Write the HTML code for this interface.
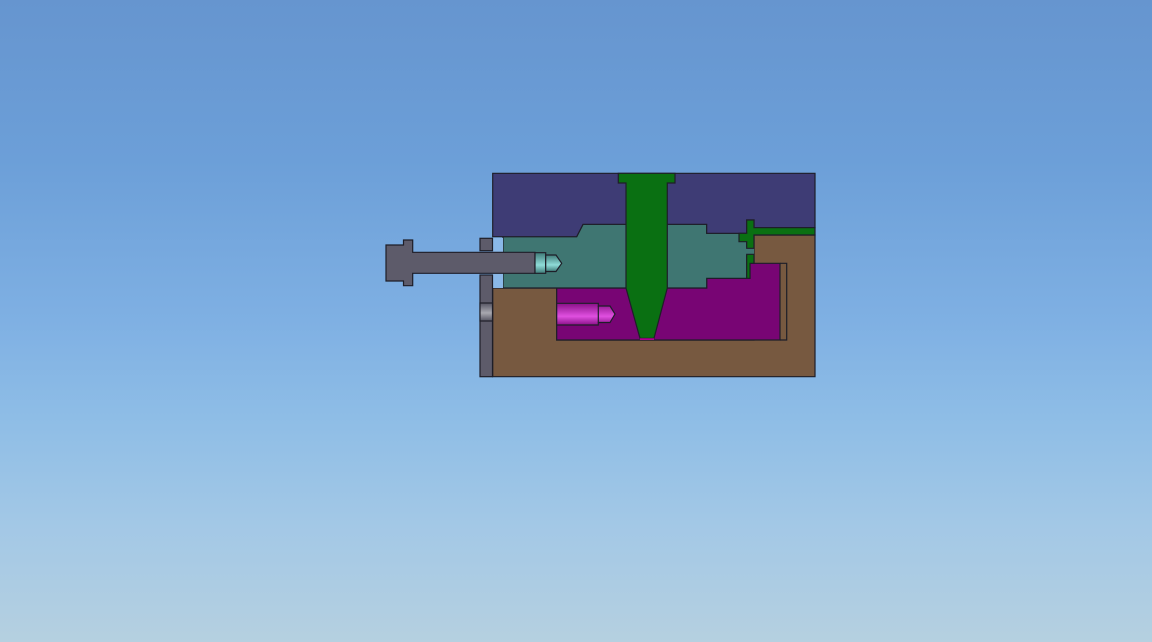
<!DOCTYPE html>
<html><head><meta charset="utf-8"><style>
html,body{margin:0;padding:0;width:1152px;height:642px;overflow:hidden}
body{background:linear-gradient(to bottom,#6695cf 0%,#6c9fd8 25%,#7fb0e3 50%,#8ebde6 65%,#a3c8e6 82%,#b5d0e0 100%)}
svg{position:absolute;left:0;top:0}
</style></head><body>
<svg width="1152" height="642" viewBox="0 0 1152 642" stroke="#1e1e28" stroke-width="1.2" stroke-linejoin="miter">
<defs>
<linearGradient id="tg" x1="0" y1="0" x2="0" y2="1"><stop offset="0" stop-color="#3f7b78"/><stop offset="0.6" stop-color="#8fdcd8"/><stop offset="1" stop-color="#3f7b78"/></linearGradient>
<linearGradient id="mg" x1="0" y1="0" x2="0" y2="1"><stop offset="0" stop-color="#8a1088"/><stop offset="0.6" stop-color="#e050e0"/><stop offset="1" stop-color="#8a1088"/></linearGradient>
<linearGradient id="gg" x1="0" y1="0" x2="0" y2="1"><stop offset="0" stop-color="#555462"/><stop offset="0.55" stop-color="#a8a8b0"/><stop offset="1" stop-color="#555462"/></linearGradient>
</defs>
<path d="M492.7 288 H556.7 V340 H754 V235 H815 V376.7 H492.7 Z" fill="#775940"/>
<path d="M556.7 288 H706.7 V278.3 H750 V263.3 H780 V340 H556.7 Z" fill="#780574"/>
<path d="M780 263.3 H786.7 V340 H780" fill="none"/>
<path d="M503 236.7 H576.7 L583 224.3 H706.7 V233.3 H746.7 V278.3 H706.7 V288 H503 Z" fill="#3f7672"/>
<rect x="746" y="247.5" width="8" height="7.5" fill="#3f7672" stroke="none"/>
<path d="M492.7 173.3 H815 V227.7 H754 V220 H746.7 V233.3 H706.7 V224.3 H583 L576.7 236.7 H492.7 Z" fill="#3e3c75"/>
<path d="M746.7 220 H754 V227.7 H815 V235 H754 V248.3 H746.7 V241.7 H739 V233.3 H746.7 Z" fill="#0a7012"/>
<path d="M746.7 254.3 H754 V263.3 H750 V278.3 H746.7 Z" fill="#0a7012"/>
<path d="M618.3 173.3 H675 V183 H667.3 V288 L654 338.3 H640 L626 288 V183 H618.3 Z" fill="#0a7012"/>
<path d="M640 338.3 H654 V340 H640 Z" fill="#b00090" stroke="none"/>
<rect x="492.7" y="238" width="10.3" height="50" fill="#8ab8e8" stroke="none"/>
<rect x="480" y="238.3" width="12.5" height="12.4" fill="#5d5b6a"/>
<rect x="480" y="275" width="12.5" height="101.7" fill="#5d5b6a"/>
<rect x="480" y="303" width="12.5" height="18" fill="url(#gg)"/>
<path d="M386 245 H403.5 V240 H412.7 V252.3 H535 V273.3 H412.7 V285.7 H403.5 V281 H386 Z" fill="#5d5b6a"/>
<path d="M535 252.7 H545.7 V273.3 H535 Z" fill="url(#tg)"/>
<path d="M545.7 255 H556 L561.7 263.3 L556 271.5 H545.7 Z" fill="url(#tg)"/>
<path d="M556.7 303.3 H598.3 V306 H610 L615 314 L610 322.5 H598.3 V325 H556.7 Z" fill="url(#mg)"/>
<line x1="598.3" y1="306" x2="598.3" y2="322.5"/>
</svg>
</body></html>
